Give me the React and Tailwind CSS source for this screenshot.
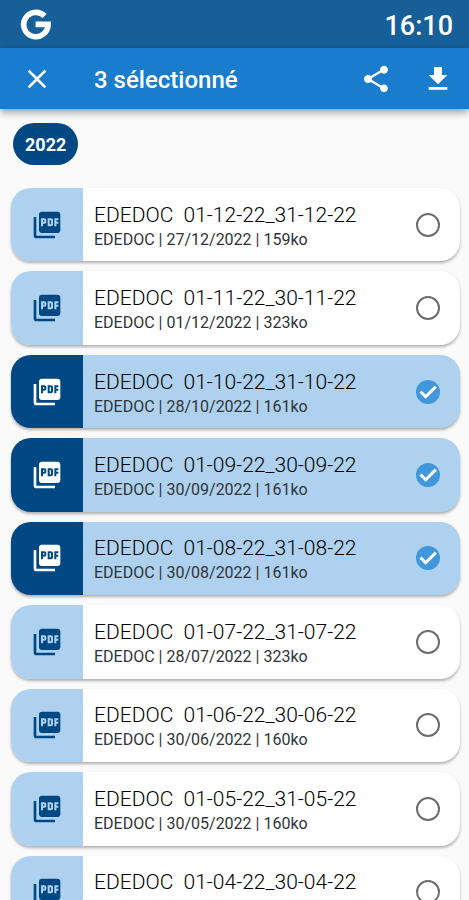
import React, { useState } from 'react';
import { MdClose, MdFileDownload, MdPictureAsPdf, MdShare } from 'react-icons/md';

const DOCUMENTS = [
  { id: 12, period: '01-12-22_31-12-22', date: '27/12/2022', size: '159ko' },
  { id: 11, period: '01-11-22_30-11-22', date: '01/12/2022', size: '323ko' },
  { id: 10, period: '01-10-22_31-10-22', date: '28/10/2022', size: '161ko' },
  { id: 9, period: '01-09-22_30-09-22', date: '30/09/2022', size: '161ko' },
  { id: 8, period: '01-08-22_31-08-22', date: '30/08/2022', size: '161ko' },
  { id: 7, period: '01-07-22_31-07-22', date: '28/07/2022', size: '323ko' },
  { id: 6, period: '01-06-22_30-06-22', date: '30/06/2022', size: '160ko' },
  { id: 5, period: '01-05-22_31-05-22', date: '30/05/2022', size: '160ko' },
  { id: 4, period: '01-04-22_30-04-22' },
];

function StatusBar() {
  return (
    <div className="flex h-12 shrink-0 items-center justify-between bg-[#165f98] px-4 text-white">
      <svg className="ml-1 size-8" viewBox="0 0 32 32" fill="none" stroke="currentColor" strokeWidth="5.6">
        <path d="M24.6 8A12.2 12.2 0 1 0 28.1 16.4H15.6" />
      </svg>
      <span className="pt-1 text-[27px] font-medium leading-8">16:10</span>
    </div>
  );
}

function SelectionBar({ count, onClear }) {
  return (
    <header className="relative z-10 flex h-[61px] shrink-0 items-center bg-[#197ccc] px-[15px] text-white shadow-[0_3px_8px_rgba(0,0,0,0.4)]">
      <button type="button" aria-label="Fermer" onClick={onClear} className="ml-[6px] mr-[41px]">
        <MdClose className="size-8" />
      </button>
      <h1 className="flex-1 pt-0.5 text-2xl font-medium">{count} sélectionné</h1>
      <button type="button" aria-label="Partager" className="mr-[30px]">
        <MdShare className="size-8" />
      </button>
      <button type="button" aria-label="Télécharger">
        <MdFileDownload className="size-8" />
      </button>
    </header>
  );
}

function DocumentCard({ doc, selected, onToggle }) {
  return (
    <label
      className={`flex cursor-pointer items-center overflow-hidden rounded-[20px] pr-5 shadow-[0_2px_3px_rgba(0,0,0,0.3)] ${
        selected ? 'bg-[#add1ef]' : 'bg-white'
      }`}
    >
      <span
        className={`mr-[11px] flex w-[72px] items-center justify-center self-stretch ${
          selected ? 'bg-[#004883] text-white' : 'bg-[#add1ef] text-[#004883]'
        }`}
      >
        <MdPictureAsPdf className="size-8" />
      </span>
      <span className="flex flex-1 flex-col pt-1">
        <span className="whitespace-pre text-[21px] font-light leading-[26px] text-black">EDEDOC  {doc.period}</span>
        <span className="h-6 text-[16px] leading-6 text-[#303438]">
          {doc.date && (
            <>
              EDEDOC | {doc.date} | {doc.size}
            </>
          )}
        </span>
      </span>
      <span className="grid size-6 shrink-0 place-items-center">
        <input
          type="checkbox"
          checked={selected}
          onChange={onToggle}
          className="col-start-1 row-start-1 size-6 appearance-none rounded-full border-2 border-[#6c6c6c] checked:border-[#4197dc] checked:bg-[#4197dc]"
        />
        {selected && (
          <svg
            className="pointer-events-none col-start-1 row-start-1 size-6 text-white"
            viewBox="0 0 24 24"
            fill="none"
            stroke="currentColor"
            strokeWidth={3}
          >
            <path d="M4.5 11.5l5.2 5.2L19.8 6.6" />
          </svg>
        )}
      </span>
    </label>
  );
}

export default function App() {
  const [selected, setSelected] = useState([10, 9, 8]);

  const toggle = (id) =>
    setSelected((prev) => (prev.includes(id) ? prev.filter((x) => x !== id) : [...prev, id]));

  return (
    <div className="flex h-screen flex-col overflow-hidden bg-[#fafafa] font-[Roboto,sans-serif]">
      <StatusBar />
      <SelectionBar count={selected.length} onClear={() => setSelected([])} />
      <main className="flex flex-1 flex-col overflow-y-auto pb-4 pl-[11px] pr-[9px] pt-[14px] [scrollbar-width:none]">
        <h2 className="mb-[23px] ml-0.5 flex h-[42px] shrink-0 items-center self-start rounded-full bg-[#004883] px-3 text-[18px] font-bold text-white">
          2022
        </h2>
        <div className="grid min-h-[741px] shrink-0 auto-rows-fr gap-[10px]">
          {DOCUMENTS.map((doc) => (
            <DocumentCard
              key={doc.id}
              doc={doc}
              selected={selected.includes(doc.id)}
              onToggle={() => toggle(doc.id)}
            />
          ))}
        </div>
      </main>
    </div>
  );
}
